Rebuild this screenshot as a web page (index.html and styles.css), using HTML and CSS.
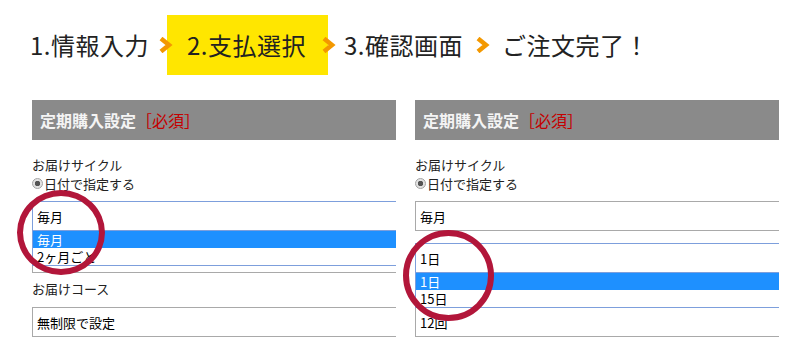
FILE: index.html
```html
<!DOCTYPE html>
<html lang="ja">
<head>
    <meta charset="UTF-8">
    <meta name="viewport" content="width=device-width, initial-scale=1.0">
    <title>定期購入設定</title>
    <link rel="stylesheet" href="styles.css">
</head>
<body>
    <div class="page">
        <div class="steps">
            <span class="step">1.情報入力</span>
            <span class="arrow"><svg width="15" height="16" viewBox="0 0 15 16"><polyline points="3,1.5 11,8 3,14.5" fill="none" stroke="#f39800" stroke-width="4.5"/></svg></span>
            <span class="step current">2.支払選択</span>
            <span class="arrow arrow-after"><svg width="15" height="16" viewBox="0 0 15 16"><polyline points="3,1.5 11,8 3,14.5" fill="none" stroke="#f39800" stroke-width="4.5"/></svg></span>
            <span class="step">3.確認画面</span>
            <span class="arrow arrow-wide"><svg width="15" height="16" viewBox="0 0 15 16"><polyline points="3,1.5 11,8 3,14.5" fill="none" stroke="#f39800" stroke-width="4.5"/></svg></span>
            <span class="step">ご注文完了！</span>
        </div>

        <div class="panels">
            <div class="panel">
                <div class="panel-head">定期購入設定<span class="req">［必須］</span></div>
                <div class="panel-body">
                    <div class="field-label">お届けサイクル</div>
                    <div class="radio-row"><span class="radio"></span>日付で指定する</div>
                    <div class="select-wrap first">
                        <div class="select focus">毎月</div>
                        <ul class="dropdown">
                            <li class="selected">毎月</li>
                            <li>2ヶ月ごと</li>
                        </ul>
                    </div>
                    <div class="select-wrap second">
                        <div class="select"></div>
                    </div>
                    <div class="field-label course">お届けコース</div>
                    <div class="select-wrap third">
                        <div class="select">無制限で設定</div>
                    </div>
                </div>
            </div>

            <div class="panel">
                <div class="panel-head">定期購入設定<span class="req">［必須］</span></div>
                <div class="panel-body">
                    <div class="field-label">お届けサイクル</div>
                    <div class="radio-row"><span class="radio"></span>日付で指定する</div>
                    <div class="select-wrap first">
                        <div class="select">毎月</div>
                    </div>
                    <div class="select-wrap second">
                        <div class="select focus">1日</div>
                        <ul class="dropdown">
                            <li class="selected">1日</li>
                            <li>15日</li>
                        </ul>
                    </div>
                    <div class="field-label course"></div>
                    <div class="select-wrap third">
                        <div class="select">12回</div>
                    </div>
                </div>
            </div>
        </div>

        <div class="mark mark-left"></div>
        <div class="mark mark-right"></div>
    </div>
</body>
</html>
```

FILE: styles.css
```css
body {
    margin: 0;
    padding: 0;
    background-color: #fff;
    font-family: "Noto Sans CJK JP", "Noto Sans", sans-serif;
    color: #222;
}

.page {
    position: relative;
    width: 800px;
    height: 348px;
    overflow: hidden;
}

/* steps */

.steps {
    display: flex;
    align-items: center;
    height: 60px;
    margin-top: 15px;
    padding-left: 30px;
}

.step {
    font-size: 24px;
    line-height: 1;
    letter-spacing: 0.5px;
    color: #222;
    white-space: nowrap;
}

.step.current {
    align-self: stretch;
    display: flex;
    align-items: center;
    background-color: #ffe600;
    padding: 0 22px 0 20px;
    margin-left: -6px;
    margin-right: -7px;
}

.arrow {
    position: relative;
    z-index: 1;
    display: flex;
    margin-left: 9px;
}

.arrow-after {
    margin-left: 0;
    margin-right: 8px;
}

.arrow-wide {
    margin-left: 12px;
    margin-right: 12px;
}

/* panels */

.panels {
    display: flex;
    gap: 19px;
    margin-top: 25px;
    padding-left: 32px;
}

.panel {
    width: 364px;
    overflow: hidden;
}

.panel-head {
    display: flex;
    align-items: center;
    height: 40px;
    padding-left: 8px;
    background-color: #8a8a8a;
    color: #f4f4f4;
    font-size: 16px;
    font-weight: bold;
}

.panel-head .req {
    color: #c40000;
    font-weight: normal;
}

.panel-body {
    padding-top: 15px;
    font-size: 13px;
}

.field-label {
    line-height: 19px;
    height: 19px;
}

.field-label.course {
    margin-top: 6px;
}

.radio-row {
    display: flex;
    align-items: center;
    height: 19px;
    line-height: 19px;
}

.radio {
    box-sizing: border-box;
    width: 11px;
    height: 11px;
    margin-right: 1px;
    border: 1px solid #a3a3a3;
    border-radius: 50%;
    background: radial-gradient(circle, #555 0 2.5px, #e2e2e2 3px);
}

.select-wrap {
    position: relative;
    width: 380px;
}

.select-wrap.first {
    margin-top: 8px;
}

.select-wrap.second {
    margin-top: 12px;
}

.select-wrap.third {
    margin-top: 9px;
}

.select {
    box-sizing: border-box;
    display: flex;
    align-items: center;
    height: 30px;
    padding-left: 4px;
    border: 1px solid #a9a9a9;
    background-color: #fff;
    color: #000;
    line-height: 1;
}

.select.focus {
    border-color: #7d9fdc;
}

.dropdown {
    position: absolute;
    z-index: 2;
    top: calc(100% - 1px);
    left: 0;
    right: 0;
    margin: 0;
    padding: 0;
    list-style: none;
    border: 1px solid #7d9fdc;
    background-color: #fff;
    color: #000;
}

.dropdown li {
    height: 17px;
    line-height: 17px;
    padding-left: 4px;
}

.dropdown li.selected {
    background-color: #1e90ff;
    color: #fff;
}

/* red marks */

.mark {
    position: absolute;
    z-index: 5;
    box-sizing: border-box;
    border: 6px solid #b2163a;
    border-radius: 50%;
}

.mark-left {
    left: 17px;
    top: 190px;
    width: 88px;
    height: 85px;
}

.mark-right {
    left: 403px;
    top: 230px;
    width: 91px;
    height: 91px;
}
```
